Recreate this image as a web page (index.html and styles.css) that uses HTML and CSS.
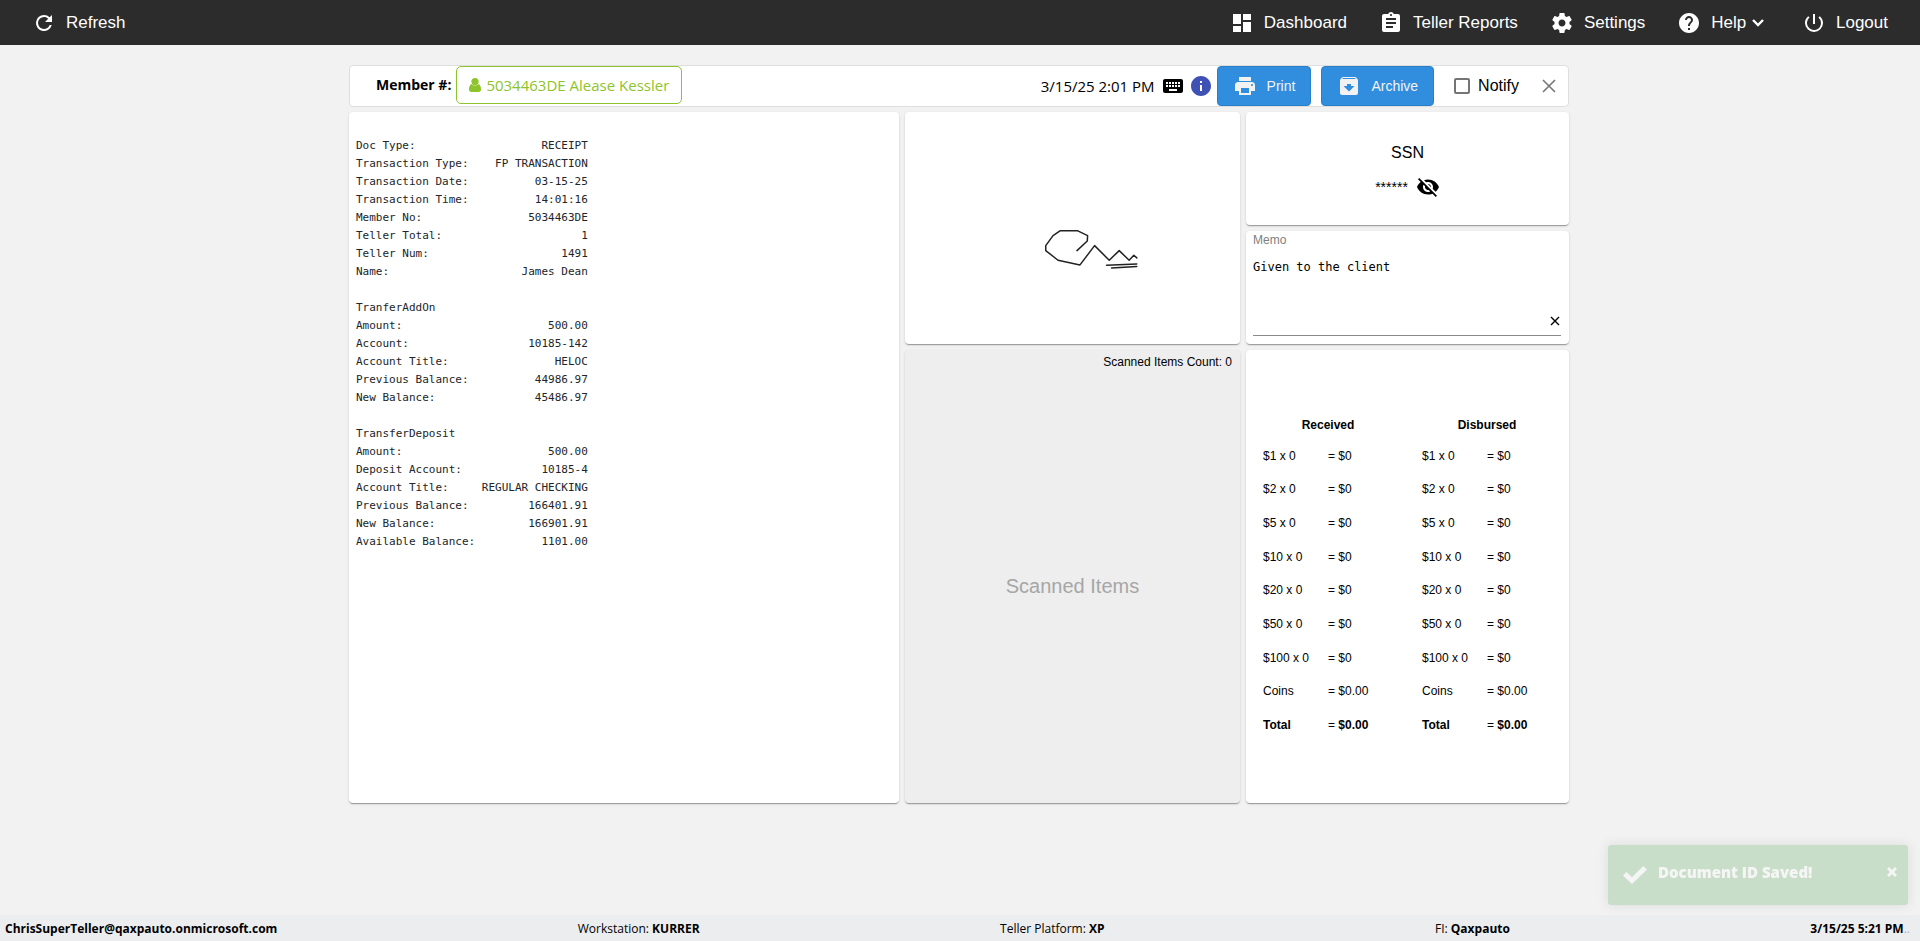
FILE: index.html
```html
<!DOCTYPE html>
<html lang="en">
<head>
	<meta charset="utf-8">
	<title>Receipt</title>
	<link rel="stylesheet" href="styles.css">
</head>
<body>
	<header class="topbar">
		<a href="#" class="nav-item">
			<svg class="icon" viewBox="0 0 24 24"><path d="M17.65 6.35A7.96 7.96 0 0 0 12 4a8 8 0 1 0 7.73 10h-2.08A6 6 0 1 1 12 6c1.66 0 3.14.69 4.22 1.78L13 11h7V4l-2.35 2.35z"/></svg>
			Refresh
		</a>
		<nav class="nav">
			<a href="#" class="nav-item">
				<svg class="icon" viewBox="0 0 24 24"><path d="M3 13h8V3H3v10zm0 8h8v-6H3v6zm10 0h8V11h-8v10zm0-18v6h8V3h-8z"/></svg>
				Dashboard
			</a>
			<a href="#" class="nav-item">
				<svg class="icon" viewBox="0 0 24 24"><path d="M19 3h-4.18C14.4 1.84 13.3 1 12 1s-2.4.84-2.82 2H5c-1.1 0-2 .9-2 2v14c0 1.1.9 2 2 2h14c1.1 0 2-.9 2-2V5c0-1.1-.9-2-2-2zm-7 0c.55 0 1 .45 1 1s-.45 1-1 1-1-.45-1-1 .45-1 1-1zm2 14H7v-2h7v2zm3-4H7v-2h10v2zm0-4H7V7h10v2z"/></svg>
				Teller Reports
			</a>
			<a href="#" class="nav-item">
				<svg class="icon" viewBox="0 0 24 24"><path d="M19.43 12.98c.04-.32.07-.64.07-.98s-.03-.66-.07-.98l2.11-1.65c.19-.15.24-.42.12-.64l-2-3.46c-.12-.22-.39-.3-.61-.22l-2.49 1c-.52-.4-1.08-.73-1.69-.98l-.38-2.65C14.46 2.18 14.25 2 14 2h-4c-.25 0-.46.18-.49.42l-.38 2.65c-.61.25-1.17.59-1.69.98l-2.49-1c-.23-.09-.49 0-.61.22l-2 3.46c-.13.22-.07.49.12.64l2.11 1.65c-.04.32-.07.65-.07.98s.03.66.07.98l-2.11 1.65c-.19.15-.24.42-.12.64l2 3.46c.12.22.39.3.61.22l2.49-1c.52.4 1.08.73 1.69.98l.38 2.65c.03.24.24.42.49.42h4c.25 0 .46-.18.49-.42l.38-2.65c.61-.25 1.17-.59 1.69-.98l2.49 1c.23.09.49 0 .61-.22l2-3.46c.12-.22.07-.49-.12-.64l-2.11-1.65zM12 15.5c-1.93 0-3.5-1.57-3.5-3.5s1.57-3.5 3.5-3.5 3.5 1.57 3.5 3.5-1.57 3.5-3.5 3.5z"/></svg>
				Settings
			</a>
			<a href="#" class="nav-item">
				<svg class="icon" viewBox="0 0 24 24"><path d="M12 2C6.48 2 2 6.48 2 12s4.48 10 10 10 10-4.48 10-10S17.52 2 12 2zm1 17h-2v-2h2v2zm2.07-7.75l-.9.92C13.45 12.9 13 13.5 13 15h-2v-.5c0-1.1.45-2.1 1.17-2.83l1.24-1.26c.37-.36.59-.86.59-1.41 0-1.1-.9-2-2-2s-2 .9-2 2H8c0-2.21 1.79-4 4-4s4 1.79 4 4c0 .88-.36 1.68-.93 2.25z"/></svg>
				<span>Help <svg class="chevron" viewBox="0 0 14 10"><path d="M2 2l5 5 5-5"/></svg></span>
			</a>
			<a href="#" class="nav-item">
				<svg class="icon" viewBox="0 0 24 24"><path d="M13 3h-2v10h2V3zm4.83 2.17l-1.42 1.42A6.92 6.92 0 0 1 19 12a7 7 0 1 1-11.42-5.42L6.17 5.17A8.93 8.93 0 0 0 3 12a9 9 0 0 0 18 0c0-2.74-1.23-5.18-3.17-6.83z"/></svg>
				Logout
			</a>
		</nav>
	</header>

	<main class="main">
		<div class="toolbar">
			<span class="member-label">Member #:</span>
			<a href="#" class="member">
				<svg class="user" viewBox="0 0 12 14"><circle cx="6" cy="3.6" r="3.6"/><path d="M2.600 6C.8 6.600 0 8.800 0 11.300 0 13 .9 14 2.300 14h7.400c1.400 0 2.300-1 2.300-2.700 0-2.500-.8-4.700-2.600-5.300a4.600 4.600 0 0 1-6.800 0z"/></svg>
				5034463DE Alease Kessler
			</a>
			<span class="date">3/15/25 2:01 PM</span>
			<svg class="icon keyboard" viewBox="0 0 24 24"><path d="M20 5H4c-1.1 0-1.99.9-1.99 2L2 17c0 1.1.9 2 2 2h16c1.1 0 2-.9 2-2V7c0-1.1-.9-2-2-2zm-9 3h2v2h-2V8zm0 3h2v2h-2v-2zM8 8h2v2H8V8zm0 3h2v2H8v-2zm-1 2H5v-2h2v2zm0-3H5V8h2v2zm9 7H8v-2h8v2zm0-4h-2v-2h2v2zm0-3h-2V8h2v2zm3 3h-2v-2h2v2zm0-3h-2V8h2v2z"/></svg>
			<svg class="icon info" viewBox="0 0 24 24"><path d="M12 2C6.48 2 2 6.48 2 12s4.48 10 10 10 10-4.48 10-10S17.52 2 12 2zm1 15h-2v-6h2v6zm0-8h-2V7h2v2z"/></svg>
			<button type="button" class="btn">
				<svg class="icon" viewBox="0 0 24 24"><path d="M19 8H5c-1.66 0-3 1.34-3 3v6h4v4h12v-4h4v-6c0-1.66-1.34-3-3-3zm-3 11H8v-5h8v5zm3-7c-.55 0-1-.45-1-1s.45-1 1-1 1 .45 1 1-.45 1-1 1zm-1-9H6v4h12V3z"/></svg>
				Print
			</button>
			<button type="button" class="btn">
				<svg class="icon" viewBox="0 0 24 24"><path d="M20.54 5.23l-1.39-1.68C18.88 3.21 18.47 3 18 3H6c-.47 0-.88.21-1.16.55L3.46 5.23C3.17 5.57 3 6.02 3 6.5V19c0 1.1.9 2 2 2h14c1.1 0 2-.9 2-2V6.5c0-.48-.17-.93-.46-1.27zM12 17.5L6.5 12H10v-2h4v2h3.5L12 17.5zM5.12 5l.81-1h12l.94 1H5.12z"/></svg>
				Archive
			</button>
			<label class="notify"><input type="checkbox">Notify</label>
			<button type="button" class="close" aria-label="Close">
				<svg viewBox="0 0 14 14"><path d="M1 1l12 12M13 1L1 13"/></svg>
			</button>
		</div>

		<div class="cards">
			<section class="card receipt">
<pre class="receipt-text">

Doc Type:                   RECEIPT
Transaction Type:    FP TRANSACTION
Transaction Date:          03-15-25
Transaction Time:          14:01:16
Member No:                5034463DE
Teller Total:                     1
Teller Num:                    1491
Name:                    James Dean

TranferAddOn
Amount:                      500.00
Account:                  10185-142
Account Title:                HELOC
Previous Balance:          44986.97
New Balance:               45486.97

TransferDeposit
Amount:                      500.00
Deposit Account:            10185-4
Account Title:     REGULAR CHECKING
Previous Balance:         166401.91
New Balance:              166901.91
Available Balance:          1101.00
</pre>
			</section>

			<section class="card signature">
				<svg viewBox="45 36 1005 698">
					<path d="M561 453L592 424L593 408L562 393H511L489 408L467 438V453L504 482L570 496L614 438L658 482L688 453L718 482L732 467L741 475"/>
					<path d="M650 497L741 493M665 505L741 501"/>
				</svg>
			</section>

			<section class="card scanned">
				<p class="scanned-count">Scanned Items Count: 0</p>
				<p class="scanned-empty">Scanned Items</p>
			</section>

			<section class="card ssn">
				<h2 class="ssn-title">SSN</h2>
				<div class="ssn-value">
					<span>******</span>
					<button type="button" class="plain" aria-label="Show SSN">
						<svg class="icon" viewBox="0 0 24 24"><path d="M12 7c2.76 0 5 2.24 5 5 0 .65-.13 1.26-.36 1.83l2.92 2.92c1.51-1.26 2.7-2.89 3.43-4.75-1.73-4.39-6-7.5-11-7.5-1.4 0-2.74.25-3.98.7l2.16 2.16C10.74 7.13 11.35 7 12 7zM2 4.27l2.28 2.28.46.46C3.08 8.3 1.78 10.02 1 12c1.73 4.39 6 7.5 11 7.5 1.55 0 3.03-.3 4.38-.84l.42.42L19.73 22 21 20.73 3.27 3 2 4.27zM7.53 9.8l1.55 1.55c-.05.21-.08.43-.08.65 0 1.66 1.34 3 3 3 .22 0 .44-.03.65-.08l1.55 1.55c-.67.33-1.41.53-2.2.53-2.76 0-5-2.24-5-5 0-.79.2-1.53.53-2.2zm4.31-.78l3.15 3.15.02-.16c0-1.66-1.34-3-3-3l-.17.01z"/></svg>
					</button>
				</div>
			</section>

			<section class="card memo">
				<label for="memo">Memo</label>
				<textarea id="memo" spellcheck="false">Given to the client</textarea>
				<button type="button" class="memo-clear" aria-label="Clear memo">
					<svg viewBox="0 0 10 10"><path d="M1 1l8 8M9 1L1 9"/></svg>
				</button>
			</section>

			<section class="card cash">
				<table>
					<thead>
						<tr><th colspan="2">Received</th></tr>
					</thead>
					<tbody>
						<tr><td>$1 x 0</td><td>= $0</td></tr>
						<tr><td>$2 x 0</td><td>= $0</td></tr>
						<tr><td>$5 x 0</td><td>= $0</td></tr>
						<tr><td>$10 x 0</td><td>= $0</td></tr>
						<tr><td>$20 x 0</td><td>= $0</td></tr>
						<tr><td>$50 x 0</td><td>= $0</td></tr>
						<tr><td>$100 x 0</td><td>= $0</td></tr>
						<tr><td>Coins</td><td>= $0.00</td></tr>
						<tr><td><b>Total</b></td><td>= <b>$0.00</b></td></tr>
					</tbody>
				</table>
				<table>
					<thead>
						<tr><th colspan="2">Disbursed</th></tr>
					</thead>
					<tbody>
						<tr><td>$1 x 0</td><td>= $0</td></tr>
						<tr><td>$2 x 0</td><td>= $0</td></tr>
						<tr><td>$5 x 0</td><td>= $0</td></tr>
						<tr><td>$10 x 0</td><td>= $0</td></tr>
						<tr><td>$20 x 0</td><td>= $0</td></tr>
						<tr><td>$50 x 0</td><td>= $0</td></tr>
						<tr><td>$100 x 0</td><td>= $0</td></tr>
						<tr><td>Coins</td><td>= $0.00</td></tr>
						<tr><td><b>Total</b></td><td>= <b>$0.00</b></td></tr>
					</tbody>
				</table>
			</section>
		</div>
	</main>

	<div class="toast" role="status">
		<svg class="toast-check" viewBox="0 0 24 18"><path d="M0 9.5L3.5 6L9 11.3L20.300 0L24 3.500L9 18z"/></svg>
		<span class="toast-text">Document ID Saved!</span>
		<button type="button" class="toast-close" aria-label="Dismiss">
			<svg viewBox="0 0 10 10"><path d="M1 1l8 8M9 1L1 9"/></svg>
		</button>
	</div>

	<footer class="footer">
		<b>ChrisSuperTeller@qaxpauto.onmicrosoft.com</b>
		<span>Workstation: <b>KURRER</b></span>
		<span class="platform">Teller Platform: <b>XP</b></span>
		<span>FI: <b>Qaxpauto</b></span>
		<span><b>3/15/25 5:21 PM</b><span class="dots">..</span></span>
	</footer>
</body>
</html>
```

FILE: styles.css
```css
*, *::before, *::after {
	margin: 0;
	padding: 0;
	box-sizing: border-box;
}
body {
	display: flex;
	flex-direction: column;
	min-height: 100vh;
	background-color: #f2f2f2;
	color: #000;
	font-family: "Liberation Sans", Arial, sans-serif;
	font-size: 12px;
}
a {
	color: inherit;
	text-decoration: none;
}
button {
	font-family: inherit;
	border: none;
	background: none;
	cursor: pointer;
}
svg {
	display: block;
}
.icon {
	flex: none;
	width: 24px;
	height: 24px;
	fill: currentColor;
}

/* top bar */
.topbar {
	display: flex;
	justify-content: space-between;
	height: 45px;
	padding: 0 16px;
	background-color: #2c2c2c;
	color: #fff;
	font-size: 17px;
}
.nav {
	display: flex;
}
.nav-item {
	display: flex;
	align-items: center;
	gap: 10px;
	padding: 0 16px;
	white-space: nowrap;
}
.chevron {
	display: inline-block;
	width: 14px;
	height: 10px;
	margin-right: 5px;
	fill: none;
	stroke: currentColor;
	stroke-width: 2.4;
}

/* member toolbar */
.main {
	flex: 1;
	width: 100%;
	max-width: 1222px;
	margin: 0 auto;
	padding: 20px 2px 20px 0;
}
.toolbar {
	display: flex;
	align-items: center;
	height: 42px;
	margin-bottom: 5px;
	padding-left: 26px;
	background-color: #fff;
	border: 1px solid #dedede;
	border-radius: 4px;
	font-size: 16px;
}
.member-label {
	padding-bottom: 4px;
	font-family: "Open Sans", "Segoe UI", sans-serif;
	font-size: 14px;
	font-weight: 700;
}
.member {
	display: flex;
	align-items: center;
	align-self: flex-start;
	gap: 5px;
	height: 38px;
	margin-left: 5px;
	padding: 0 12px;
	border: 1px solid #8dc42c;
	border-radius: 5px;
	color: #8dc42c;
	font-family: "Open Sans", "Segoe UI", sans-serif;
	font-size: 15px;
}
.user {
	width: 12px;
	height: 14px;
	fill: currentColor;
}
.date {
	margin-left: auto;
	font-family: "Open Sans", "Segoe UI", sans-serif;
	font-size: 15px;
}
.keyboard {
	margin: 0 4px 0 6px;
}
.info {
	margin-right: 4px;
	color: #3f51b5;
}
.btn {
	display: flex;
	align-items: center;
	gap: 10px;
	height: 40px;
	margin-right: 10px;
	padding: 0 15px;
	border: 1px solid #2a7fc6;
	border-radius: 4px;
	background-color: #318ddd;
	color: #f2f2f2;
	font-size: 14px;
}
.notify {
	display: flex;
	align-items: center;
	gap: 8px;
	margin: 0 23px 0 10px;
}
.notify input {
	width: 16px;
	height: 16px;
	border: 2px solid #757575;
	border-radius: 2px;
	appearance: none;
}
.close {
	margin-right: 12px;
}
.close svg {
	width: 14px;
	height: 14px;
	stroke: #757575;
	stroke-width: 1.6;
}

/* cards */
.cards {
	display: grid;
	grid-template-columns: 550fr 335fr 323fr;
	grid-template-rows: 113px 113px 453px;
	gap: 6px;
}
.card {
	background-color: #fff;
	border-radius: 4px;
	box-shadow: 0 2px 1px -1px rgba(0,0,0,.2), 0 1px 1px 0 rgba(0,0,0,.14), 0 1px 3px 0 rgba(0,0,0,.12);
}
.receipt {
	grid-column: 1;
	grid-row: 1 / 4;
	padding: 7px;
}
.receipt-text {
	color: #212529;
	font-family: "DejaVu Sans Mono", Consolas, monospace;
	font-size: 11px;
	line-height: 18px;
}
.signature {
	grid-column: 2;
	grid-row: 1 / 3;
}
.signature svg {
	width: 100%;
	height: 100%;
	fill: none;
	stroke: #222;
	stroke-width: 4.5;
	stroke-linecap: round;
	stroke-linejoin: round;
}
.scanned {
	display: flex;
	flex-direction: column;
	grid-column: 2;
	grid-row: 3;
	background-color: #eee;
}
.scanned-count {
	padding: 5px 8px 0;
	text-align: right;
}
.scanned-empty {
	flex: 1;
	display: flex;
	align-items: center;
	justify-content: center;
	color: #a6a6a6;
	font-size: 20px;
}
.ssn {
	display: flex;
	flex-direction: column;
	align-items: center;
	justify-content: center;
	gap: 13px;
	padding-top: 5px;
}
.ssn-title {
	font-size: 16px;
	font-weight: 400;
}
.ssn-value {
	display: flex;
	align-items: center;
	gap: 8px;
	font-size: 14px;
}
.memo {
	position: relative;
	display: flex;
	flex-direction: column;
	grid-column: 3;
	grid-row: 2;
	padding: 2px 8px 8px 7px;
}
.memo label {
	color: #808080;
}
.memo textarea {
	flex: 1;
	padding-top: 12px;
	border: none;
	border-bottom: 1px solid #8a8a8a;
	background: none;
	font-family: "DejaVu Sans Mono", Consolas, monospace;
	font-size: 12px;
	line-height: 16px;
	resize: none;
	outline: none;
}
.memo-clear {
	position: absolute;
	right: 9px;
	bottom: 18px;
}
.memo-clear svg {
	width: 10px;
	height: 10px;
	stroke: #000;
	stroke-width: 1.4;
}
.cash {
	display: flex;
	align-items: center;
	gap: 29px;
	grid-column: 3;
	grid-row: 3;
	padding-left: 17px;
}
.cash table {
	width: 130px;
	height: 331px;
	border-spacing: 0;
	table-layout: fixed;
}
.cash th {
	height: 28px;
}

/* toast */
.toast {
	position: fixed;
	right: 12px;
	bottom: 36px;
	display: flex;
	align-items: flex-start;
	width: 300px;
	height: 60px;
	padding: 15px 11px 15px 15px;
	border-radius: 3px;
	background-color: #51a351;
	box-shadow: 0 0 12px #999;
	color: #fff;
	opacity: .25;
}
.toast-check {
	width: 24px;
	height: 18px;
	margin: 6px 11px 0 0;
	fill: currentColor;
}
.toast-text {
	flex: 1;
	font-family: "Open Sans", "Segoe UI", sans-serif;
	font-size: 15px;
	font-weight: 800;
	line-height: 24px;
}
.toast-close {
	margin-top: 7px;
	color: inherit;
}
.toast-close svg {
	width: 10px;
	height: 10px;
	stroke: currentColor;
	stroke-width: 2.8;
}

/* footer */
.footer {
	display: flex;
	align-items: center;
	justify-content: space-between;
	height: 26px;
	padding: 0 10px 0 5px;
	background-color: #ecedef;
	font-family: "Open Sans", "Segoe UI", sans-serif;
	font-size: 12px;
}
.platform {
	padding-right: 30px;
}
.dots {
	color: #a9b4be;
}
```
